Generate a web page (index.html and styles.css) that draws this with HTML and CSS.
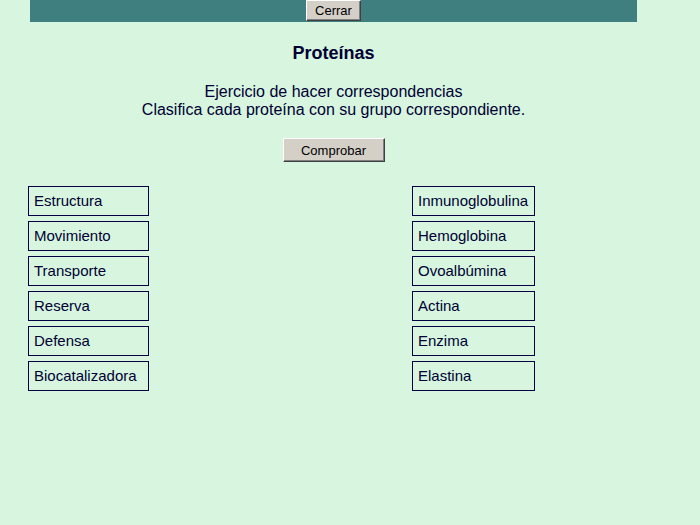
FILE: index.html
```html
<!DOCTYPE html>
<html lang="es">
<head>
<meta charset="utf-8">
<title>Proteínas</title>
<link rel="stylesheet" href="styles.css">
</head>
<body>
<div class="page">
  <div class="topbar"><button class="btn btn-close">Cerrar</button></div>
  <h1 class="title">Proteínas</h1>
  <p class="intro">Ejercicio de hacer correspondencias<br>Clasifica cada proteína con su grupo correspondiente.</p>
  <div class="actions"><button class="btn btn-check">Comprobar</button></div>
</div>
<div class="match">
  <div class="col col-left">
    <div class="item">Estructura</div>
    <div class="item">Movimiento</div>
    <div class="item">Transporte</div>
    <div class="item">Reserva</div>
    <div class="item">Defensa</div>
    <div class="item">Biocatalizadora</div>
  </div>
  <div class="col col-right">
    <div class="item">Inmunoglobulina</div>
    <div class="item">Hemoglobina</div>
    <div class="item">Ovoalbúmina</div>
    <div class="item">Actina</div>
    <div class="item">Enzima</div>
    <div class="item">Elastina</div>
  </div>
</div>
</body>
</html>
```
FILE: styles.css
```css
html, body {
  margin: 0;
  padding: 0;
  background: #d7f5df;
  font-family: "Liberation Sans", Arial, sans-serif;
  color: #000033;
}
.page {
  margin-left: 30px;
  width: 607px;
}
.topbar {
  height: 22px;
  background: #407f7f;
  display: flex;
  justify-content: center;
  align-items: flex-start;
}
.btn {
  font-family: "Liberation Sans", Arial, sans-serif;
  font-size: 13px;
  color: #000;
  background: #d4d0c8;
  border: 1px solid;
  border-color: #ffffff #404040 #404040 #ffffff;
  box-shadow: inset -1px -1px 0 #808080;
  padding: 0;
  margin: 0;
}
.btn-close {
  width: 55px;
  height: 21px;
  line-height: 17px;
}
.title {
  margin: 21px 0 0 0;
  font-size: 18px;
  line-height: 21px;
  font-weight: bold;
  text-align: center;
}
.intro {
  margin: 19px 0 0 0;
  font-size: 16px;
  line-height: 18px;
  text-align: center;
}
.actions {
  margin-top: 19px;
  display: flex;
  justify-content: center;
}
.btn-check {
  width: 102px;
  height: 24px;
}
.match {
  margin: 24px 0 0 28px;
  width: 507px;
  display: flex;
  justify-content: space-between;
}
.col {
  display: flex;
  flex-direction: column;
  gap: 5px;
}
.col-left .item { width: 121px; }
.col-right .item { width: 123px; }
.item {
  box-sizing: border-box;
  height: 30px;
  border: 1px solid #000044;
  padding: 0 0 0 5px;
  font-size: 15px;
  line-height: 28px;
  white-space: nowrap;
  overflow: hidden;
}
```
